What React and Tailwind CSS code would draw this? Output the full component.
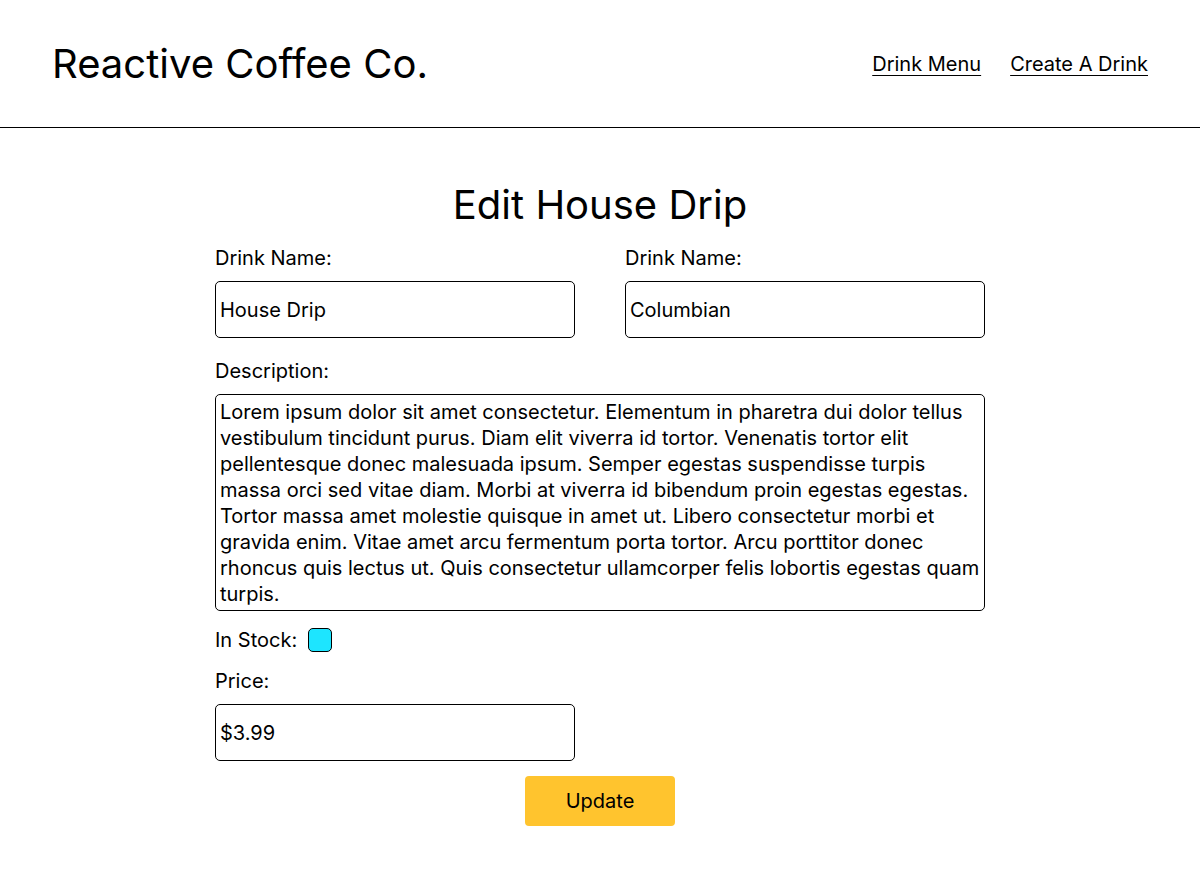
import React, { useState } from 'react';

const description =
  'Lorem ipsum dolor sit amet consectetur. Elementum in pharetra dui dolor tellus vestibulum tincidunt purus. Diam elit viverra id tortor. Venenatis tortor elit pellentesque donec malesuada ipsum. Semper egestas suspendisse turpis massa orci sed vitae diam. Morbi at viverra id bibendum proin egestas egestas. Tortor massa amet molestie quisque in amet ut. Libero consectetur morbi et gravida enim. Vitae amet arcu fermentum porta tortor. Arcu porttitor donec rhoncus quis lectus ut. Quis consectetur ullamcorper felis lobortis egestas quam turpis.';

function Field({ label, value, onChange }) {
  return (
    <div className="flex flex-col w-[360px]">
      <label className="text-xl leading-6 text-black">{label}</label>
      <input
        value={value}
        onChange={(e) => onChange(e.target.value)}
        className="mt-[11px] h-[57px] w-full border border-black rounded-[5px] px-1 text-xl text-black outline-none"
      />
    </div>
  );
}

export default function App() {
  const [name, setName] = useState('House Drip');
  const [bean, setBean] = useState('Columbian');
  const [desc, setDesc] = useState(description);
  const [price, setPrice] = useState('$3.99');

  return (
    <div className="min-h-screen bg-white text-black font-['Inter','Noto_Sans',sans-serif]">
      <header className="h-[128px] border-b border-black flex items-center justify-between pl-[52px] pr-[52px]">
        <h1 className="text-[40px] leading-none">Reactive Coffee Co.</h1>
        <nav className="flex gap-[29px] text-xl">
          <a href="#" className="underline underline-offset-4 decoration-1">Drink Menu</a>
          <a href="#" className="underline underline-offset-4 decoration-1">Create A Drink</a>
        </nav>
      </header>

      <main className="w-[770px] mx-auto pt-[53px]">
        <h2 className="text-[40px] leading-[48px] text-center">Edit House Drip</h2>

        <div className="mt-[17px] flex justify-between">
          <Field label="Drink Name:" value={name} onChange={setName} />
          <Field label="Drink Name:" value={bean} onChange={setBean} />
        </div>

        <label className="block mt-[21px] text-xl leading-6">Description:</label>
        <textarea
          value={desc}
          onChange={(e) => setDesc(e.target.value)}
          className="mt-[11px] block w-full h-[217px] border border-black rounded-[5px] px-1 pt-[4px] pb-[2px] text-xl leading-[26px] resize-none outline-none"
        />

        <div className="mt-[17px] flex items-center gap-[11px] text-xl leading-6">
          <span>In Stock:</span>
          <span className="w-6 h-6 rounded-[5px] border border-black bg-[#1de5ff]" />
        </div>

        <div className="mt-[17px]">
          <Field label="Price:" value={price} onChange={setPrice} />
        </div>

        <div className="mt-[15px] flex justify-center">
          <button className="w-[150px] h-[50px] rounded-[4px] bg-[#ffc42e] text-xl">Update</button>
        </div>
      </main>
    </div>
  );
}
